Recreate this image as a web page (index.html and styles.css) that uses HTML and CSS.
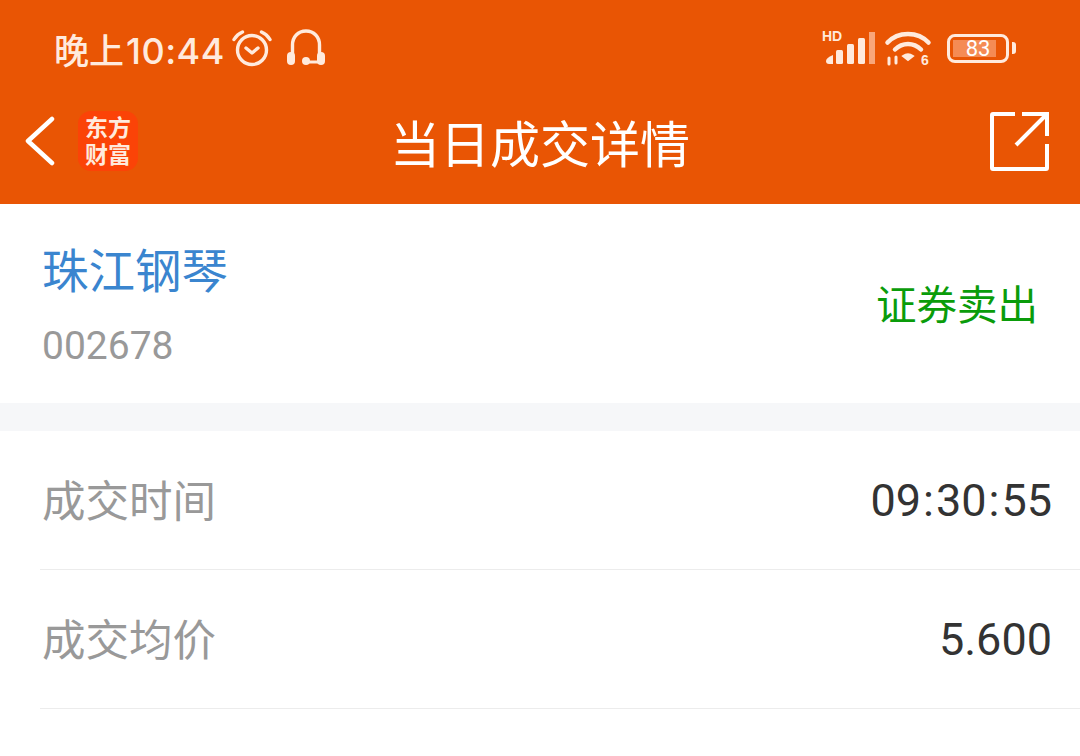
FILE: index.html
```html
<!DOCTYPE html>
<html lang="zh-CN">
<head>
  <meta charset="UTF-8">
  <title>当日成交详情</title>
  <link rel="stylesheet" href="styles.css">
</head>
<body>

<!-- 顶部状态栏 -->
<div class="status-bar">
  <div class="status-left">
    <span class="clock"><span class="clock-cn">晚上</span>10:44</span>
    <svg class="icon-alarm" width="40" height="38" viewBox="0 0 40 38" fill="none" stroke="#ffeadd" stroke-width="3.400" stroke-linecap="round" stroke-linejoin="round">
      <circle cx="20" cy="21" r="14.500"/>
      <path d="M14 19l6 5 6-5"/>
      <path d="M2 10.500C4 7 7 4.500 10.500 3"/>
      <path d="M38 10.500C36 7 33 4.500 29.500 3"/>
    </svg>
    <svg class="icon-headset" width="40" height="38" viewBox="0 0 40 38" fill="none">
      <path d="M6.500 31V16C6.500 8 12 2 20 2s13.500 6 13.500 14v15" stroke="#ffeadd" stroke-width="3.400"/>
      <rect x="1" y="23" width="8" height="13" rx="4" fill="#ffeadd"/>
      <rect x="31" y="23" width="8" height="13" rx="4" fill="#ffeadd"/>
      <circle cx="20" cy="32" r="4" fill="#ffeadd"/>
      <path d="M20 33h12" stroke="#ffeadd" stroke-width="3"/>
    </svg>
  </div>
  <div class="status-right">
    <div class="signal">
      <span class="hd">HD</span>
      <svg width="50" height="32" viewBox="0 0 50 32">
        <path d="M1 29q0-3 7-6v9H4q-3 0-3-3z" fill="#ffeadd"/>
        <rect x="11" y="18" width="7" height="14" rx="1.500" fill="#ffeadd"/>
        <rect x="22" y="12" width="7" height="20" rx="1.500" fill="#ffeadd"/>
        <rect x="33" y="6" width="7" height="26" rx="1.500" fill="#ffeadd"/>
        <rect x="44" y="0" width="6" height="32" fill="#f9a67a"/>
      </svg>
    </div>
    <svg class="icon-wifi" width="46" height="36" viewBox="0 0 46 36" fill="none" stroke="#ffeadd" stroke-linecap="round">
      <path d="M2.500 12.500C13 1 33 1 43.500 12.500" stroke-width="4.500"/>
      <path d="M10 19.500c7.500-7.500 18.500-7.500 26 0" stroke-width="4.500"/>
      <path d="M18 26c3-2 7-2 10 0l-5 4z" fill="#ffeadd" stroke-width="2"/>
      <path d="M4 28v6M11 27v6" stroke-width="3"/>
      <text class="wifi-six" x="36" y="35">6</text>
    </svg>
    <div class="battery">
      <div class="battery-body">
        <div class="battery-fill"></div>
        <span class="battery-num">83</span>
      </div>
      <div class="battery-cap"></div>
    </div>
  </div>
</div>

<!-- 标题栏 -->
<div class="nav-bar">
  <div class="nav-left">
    <svg class="icon-back" width="32" height="50" viewBox="0 0 32 50" fill="none" stroke="#fff" stroke-width="4.500" stroke-linecap="round" stroke-linejoin="round">
      <path d="M28 3L4 25l24 22"/>
    </svg>
    <div class="logo">东方<br>财富</div>
  </div>
  <div class="nav-title">当日成交详情</div>
  <div class="nav-right">
    <svg class="icon-share" width="60" height="60" viewBox="0 0 60 60" fill="none" stroke="#fff" stroke-width="4">
      <path d="M25 3H3a1 1 0 0 0-1 1v53a1 1 0 0 0 1 1h53a1 1 0 0 0 1-1V33"/>
      <path d="M26 34L57 3"/>
      <path d="M32 3h25v22"/>
    </svg>
  </div>
</div>

<!-- 股票信息 -->
<div class="stock">
  <div>
    <div class="stock-name">珠江钢琴</div>
    <div class="stock-code">002678</div>
  </div>
  <div class="stock-type">证券卖出</div>
</div>

<div class="gap"></div>

<!-- 成交明细 -->
<div class="detail-row">
  <span class="detail-label">成交时间</span>
  <span class="detail-value">09<span class="colon">:</span>30<span class="colon">:</span>55</span>
</div>
<div class="detail-row">
  <span class="detail-label">成交均价</span>
  <span class="detail-value">5.600</span>
</div>

</body>
</html>
```

FILE: styles.css
```css
body {
  margin: 0;
  height: 756px;
  overflow: hidden;
  background-color: #fff;
  font-family: Roboto, "Noto Sans CJK SC", sans-serif;
}

/* 状态栏 */
.status-bar {
  height: 96px;
  box-sizing: border-box;
  padding: 0 64px 0 54px;
  display: flex;
  justify-content: space-between;
  align-items: center;
  background-color: #e95504;
}
.status-left {
  display: flex;
  align-items: center;
}
.clock {
  font-family: Inter, "Noto Sans CJK SC", sans-serif;
  font-size: 36px;
  font-weight: 500;
  letter-spacing: 0.500px;
  color: #ffeadd;
}
.clock-cn {
  font-size: 35px;
  margin-right: 2px;
  letter-spacing: 0;
}
.icon-alarm {
  margin-left: 7px;
}
.icon-headset {
  margin-left: 14px;
}
.status-right {
  display: flex;
  align-items: center;
}
.signal {
  position: relative;
  width: 50px;
  height: 32px;
}
.signal svg {
  display: block;
}
.hd {
  position: absolute;
  left: -3px;
  top: -4px;
  font-family: "Liberation Sans", sans-serif;
  font-size: 14px;
  font-weight: 700;
  line-height: 16px;
  color: #ffeadd;
}
.icon-wifi {
  margin-left: 10px;
  overflow: visible;
}
.wifi-six {
  font-family: "Liberation Sans", sans-serif;
  font-size: 14px;
  font-weight: 700;
  fill: #ffeadd;
  stroke: none;
}
.battery {
  margin-left: 16px;
  display: flex;
  align-items: center;
}
.battery-body {
  position: relative;
  width: 62px;
  height: 29px;
  box-sizing: border-box;
  border: 3px solid #ffeadd;
  border-radius: 8px;
}
.battery-fill {
  position: absolute;
  left: 3px;
  top: 3px;
  bottom: 3px;
  width: 43px;
  background-color: #f58b54;
}
.battery-num {
  position: absolute;
  left: 0;
  right: 0;
  top: 0;
  line-height: 23px;
  text-align: center;
  font-size: 22px;
  color: #fff;
}
.battery-cap {
  width: 4px;
  height: 12px;
  margin-left: 3px;
  border-radius: 0 3px 3px 0;
  background-color: #ffeadd;
}

/* 标题栏 */
.nav-bar {
  height: 108px;
  box-sizing: border-box;
  padding: 0 30px 18px;
  display: grid;
  grid-template-columns: 1fr auto 1fr;
  align-items: center;
  background-color: #e95504;
}
.nav-left {
  display: flex;
  align-items: center;
  margin-left: -6px;
}
.nav-right {
  display: flex;
  justify-content: flex-end;
}
.logo {
  width: 60px;
  height: 60px;
  margin-left: 22px;
  border-radius: 13px;
  background-color: #fb4307;
  color: #ffeadd;
  font-family: "Noto Sans CJK SC", sans-serif;
  font-size: 23px;
  font-weight: 700;
  line-height: 27px;
  text-align: center;
  padding-top: 2px;
  box-sizing: border-box;
}
.nav-title {
  font-family: "Noto Sans CJK SC", sans-serif;
  font-size: 50px;
  line-height: 60px;
  color: #fff;
}
.icon-share {
  display: block;
}

/* 股票信息 */
.stock {
  height: 199px;
  box-sizing: border-box;
  padding: 33px 42px 0;
  display: flex;
  justify-content: space-between;
  align-items: flex-start;
}
.stock-name {
  font-family: "Noto Sans CJK SC", sans-serif;
  font-size: 46.500px;
  line-height: 62px;
  color: #3a85cf;
}
.stock-code {
  margin-top: 24px;
  font-size: 39px;
  line-height: 46px;
  color: #999;
}
.stock-type {
  margin-top: 41px;
  font-family: "Noto Sans CJK SC", sans-serif;
  font-size: 40.500px;
  line-height: 50px;
  color: #0a9c0a;
}

.gap {
  height: 28px;
  background-color: #f6f7f9;
}

/* 成交明细 */
.detail-row {
  height: 139px;
  box-sizing: border-box;
  margin-left: 40px;
  padding-right: 28px;
  border-bottom: 1px solid #ececec;
  display: flex;
  justify-content: space-between;
  align-items: center;
}
.detail-label {
  margin-left: 2px;
  margin-top: -4px;
  font-family: "Noto Sans CJK SC", sans-serif;
  font-size: 43.500px;
  color: #999;
}
.detail-value {
  font-size: 45px;
  color: #333;
}
.colon {
  margin: 0 2px;
}
```
